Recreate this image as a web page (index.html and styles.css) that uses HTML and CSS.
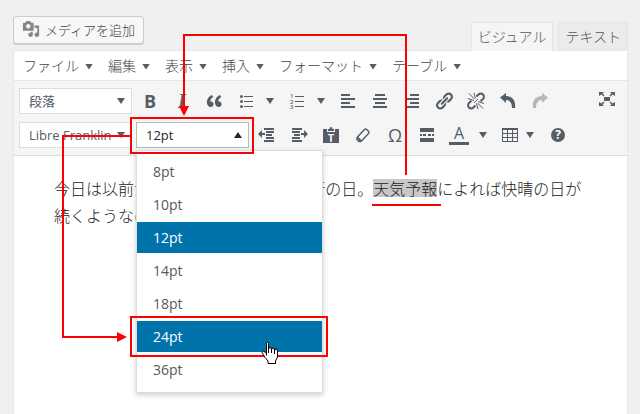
FILE: index.html
```html
<!DOCTYPE html>
<html lang="ja">
<head>
  <meta charset="UTF-8">
  <meta name="viewport" content="width=device-width, initial-scale=1">
  <title>投稿の編集</title>
  <link rel="stylesheet" href="styles.css">
</head>
<body>

<div class="page">

  <!-- Media button and tabs -->
  <div class="editor-head">
    <button type="button" class="media-btn">
      <svg class="media-icon" viewBox="0 0 20 20"><path d="M13 11V4c0-.55-.45-1-1-1h-1.67L9 1H5L3.67 3H2c-.55 0-1 .45-1 1v7c0 .55.45 1 1 1h10c.55 0 1-.45 1-1zM7 4.5c1.38 0 2.5 1.12 2.5 2.5S8.38 9.5 7 9.5 4.5 8.38 4.5 7 5.62 4.5 7 4.5zM14 6h5v10.5c0 1.38-1.12 2.5-2.5 2.5S14 17.88 14 16.5s1.12-2.5 2.5-2.5c.17 0 .34.02.5.05V9h-3V6zm-4 8.05V13h2v3.5c0 1.38-1.12 2.5-2.5 2.5S7 17.88 7 16.5 8.12 14 9.5 14c.17 0 .34.02.5.05z"/></svg>
      メディアを追加
    </button>
    <div class="tabs">
      <button type="button" class="tab active">ビジュアル</button>
      <button type="button" class="tab">テキスト</button>
    </div>
  </div>

  <div class="editor">

    <!-- Menu bar -->
    <div class="menubar">
      <button type="button" class="menu-btn">ファイル<span class="caret"></span></button>
      <button type="button" class="menu-btn">編集<span class="caret"></span></button>
      <button type="button" class="menu-btn">表示<span class="caret"></span></button>
      <button type="button" class="menu-btn">挿入<span class="caret"></span></button>
      <button type="button" class="menu-btn">フォーマット<span class="caret"></span></button>
      <button type="button" class="menu-btn">テーブル<span class="caret"></span></button>
    </div>

    <!-- Toolbars -->
    <div class="toolbars">
      <div class="toolbar">
        <div class="selects">
          <div class="select-box">
            <select aria-label="段落"><option>段落</option></select>
            <span class="caret"></span>
          </div>
        </div>
        <button type="button" class="tool bold" aria-label="太字">B</button>
        <button type="button" class="tool italic" aria-label="イタリック">I</button>
        <button type="button" class="tool" aria-label="引用">
          <svg viewBox="0 0 20 20"><path d="M9.49 13.22c0-.74-.2-1.38-.61-1.9-.62-.78-1.83-.88-2.53-.72-.29-1.65 1.11-3.75 2.92-4.65L7.88 4c-2.73 1.3-5.42 4.28-4.96 8.05C3.21 14.43 4.59 16 6.54 16c.85 0 1.56-.25 2.12-.75s.83-1.18.83-2.03zm8.05 0c0-.74-.2-1.38-.61-1.9-.63-.78-1.83-.88-2.53-.72-.29-1.65 1.11-3.75 2.92-4.65L15.93 4c-2.73 1.3-5.41 4.28-4.95 8.05.29 2.38 1.66 3.95 3.61 3.95.85 0 1.56-.25 2.12-.75s.83-1.18.83-2.03z"/></svg>
        </button>
        <button type="button" class="tool split" aria-label="番号なしリスト">
          <svg viewBox="0 0 20 20"><circle cx="5.5" cy="5.5" r="1.5"/><circle cx="5.5" cy="10.5" r="1.5"/><circle cx="5.5" cy="15.5" r="1.5"/><path d="M8 5h9v1H8zM8 10h9v1H8zM8 15h9v1H8z"/></svg>
          <span class="caret"></span>
        </button>
        <button type="button" class="tool split" aria-label="番号付きリスト">
          <svg viewBox="0 0 20 20"><text class="digit" x="3" y="7">1</text><text class="digit" x="3" y="13">2</text><text class="digit" x="3" y="18">3</text><path d="M8 5h9v1H8zM8 10h9v1H8zM8 15h9v1H8z"/></svg>
          <span class="caret"></span>
        </button>
        <button type="button" class="tool" aria-label="左寄せ">
          <svg viewBox="0 0 20 20"><path d="M3 3h9v2H3zM3 7h14v2H3zM3 11h9v2H3zM3 15h14v2H3z"/></svg>
        </button>
        <button type="button" class="tool" aria-label="中央揃え">
          <svg viewBox="0 0 20 20"><path d="M5 3h10v2H5zM3 7h14v2H3zM5 11h10v2H5zM3 15h14v2H3z"/></svg>
        </button>
        <button type="button" class="tool" aria-label="右寄せ">
          <svg viewBox="0 0 20 20"><path d="M8 3h9v2H8zM3 7h14v2H3zM8 11h9v2H8zM3 15h14v2H3z"/></svg>
        </button>
        <button type="button" class="tool" aria-label="リンク">
          <svg viewBox="0 0 20 20"><path d="M17.74 2.76c1.68 1.69 1.68 4.41 0 6.1l-1.53 1.52c-1.12 1.12-2.7 1.47-4.14 1.09l2.62-2.61.76-.77.76-.76c.84-.84.84-2.2 0-3.04-.84-.85-2.2-.85-3.04 0l-.77.76-3.38 3.38c-.37-1.44-.02-3.02 1.1-4.14l1.52-1.53c1.69-1.68 4.42-1.68 6.1 0zM8.59 13.43l5.34-5.34c.42-.42.42-1.1 0-1.52-.44-.43-1.13-.39-1.53 0l-5.33 5.34c-.42.42-.42 1.1 0 1.52.44.43 1.13.39 1.52 0zm-.76 2.29l4.14-4.15c.38 1.44.03 3.02-1.09 4.14l-1.52 1.53c-1.69 1.68-4.41 1.68-6.1 0-1.68-1.68-1.68-4.42 0-6.1l1.53-1.52c1.12-1.12 2.7-1.47 4.14-1.1l-4.14 4.15c-.85.84-.85 2.2 0 3.05.84.84 2.2.84 3.04 0z"/></svg>
        </button>
        <button type="button" class="tool" aria-label="リンクの削除">
          <svg class="line" viewBox="0 0 20 20"><path stroke-width="2" d="M10.500 5.500l2-2a3 3 0 0 1 4.500 4.500l-2.500 2.200M9.500 14.500l-2 2a3 3 0 0 1-4.500-4.500l2.500-2.200"/><path d="M8.500 8L3 2.500M9.500 7.500L8 2M8 9.500L2 7.500M11.500 12l5.500 5.500M10.500 12.500L12 18M12 10.500l6 2"/><path d="M8 12l4-4"/></svg>
        </button>
        <button type="button" class="tool" aria-label="取り消し">
          <svg viewBox="0 0 20 20"><path d="M8 2v3c6 0 10 4 9 12h-3c0-5-2-8-6-8v3L2 6.500z"/></svg>
        </button>
        <button type="button" class="tool" aria-label="やり直し" disabled>
          <svg viewBox="0 0 20 20"><path d="M12 2v3C6 5 2 9 3 17h3c0-5 2-8 6-8v3l6-5.500z"/></svg>
        </button>
        <button type="button" class="tool fullscreen" aria-label="集中執筆モード">
          <svg viewBox="0 0 20 20"><path d="M7 8h6v4H7zM2 3h5L5.500 4.500 7.500 6.500l-1 1-2-2L2 7zM18 3h-5l1.500 1.500-2 2 1 1 2-2L18 7zM2 17h5l-1.500-1.500 2-2-1-1-2 2L2 13zM18 17h-5l1.500-1.500-2-2 1-1 2 2L18 13z"/></svg>
        </button>
      </div>

      <div class="toolbar">
        <div class="selects">
          <div class="select-box">
            <select aria-label="フォント"><option>Libre Franklin</option></select>
            <span class="caret"></span>
          </div>
          <div class="select-box open">
            <select aria-label="フォントサイズ"><option>12pt</option></select>
            <span class="caret up"></span>
            <div class="size-menu">
              <button type="button" class="size">8pt</button>
              <button type="button" class="size">10pt</button>
              <button type="button" class="size selected">12pt</button>
              <button type="button" class="size">14pt</button>
              <button type="button" class="size">18pt</button>
              <button type="button" class="size selected">24pt</button>
              <button type="button" class="size">36pt</button>
            </div>
          </div>
        </div>
        <button type="button" class="tool" aria-label="インデントを減らす">
          <svg viewBox="0 0 20 20"><path d="M7 3h10v2H7zM9 6h8v2H9zM9 9h6v2H9zM9 12h8v2H9zM7 15h10v2H7zM1 9l4-4v3h3v2H5v3z"/></svg>
        </button>
        <button type="button" class="tool" aria-label="インデントを増やす">
          <svg viewBox="0 0 20 20"><path d="M3 3h10v2H3zM3 6h8v2H3zM5 9h6v2H5zM3 12h8v2H3zM3 15h10v2H3zM19 9l-4-4v3h-3v2h3v3z"/></svg>
        </button>
        <button type="button" class="tool" aria-label="テキストとしてペースト">
          <svg viewBox="0 0 20 20"><path d="M2 4h4v3h8V4h4v14H2z"/><path d="M7 6V4h1.500a1.500 2 0 0 1 3 0H13v2z"/><text class="paste-t" x="10" y="17">T</text></svg>
        </button>
        <button type="button" class="tool" aria-label="書式設定をクリア">
          <svg class="line" viewBox="0 0 20 20"><path stroke-width="1.400" d="M4 12.500l7.500-8c.7-.7 1.500-.7 2.200 0l1.800 1.800c.7.700.7 1.500 0 2.200l-7.500 8H6L4 14.500z"/><path stroke-width="2" d="M4.500 12.500L8 16"/></svg>
        </button>
        <button type="button" class="tool omega" aria-label="特殊文字">Ω</button>
        <button type="button" class="tool" aria-label="続きを読むタグ">
          <svg viewBox="0 0 20 20"><path d="M3 3h14v4H3zM3 13h14v4H3zM3 9h2v2H3zM6 9h3v2H6zM11 9h3v2h-3zM15 9h2v2h-2z"/></svg>
        </button>
        <button type="button" class="tool split" aria-label="テキスト色">
          <span class="color-letter">A</span>
          <span class="caret"></span>
        </button>
        <button type="button" class="tool split narrow" aria-label="テーブル">
          <svg viewBox="0 0 20 20"><path fill-rule="evenodd" d="M2 3h16v14H2zM3 5v3h4V5zM8 5v3h4V5zM13 5v3h4V5zM3 9v3h4V9zM8 9v3h4V9zM13 9v3h4V9zM3 13v3h4v-3zM8 13v3h4v-3zM13 13v3h4v-3z"/></svg>
          <span class="caret"></span>
        </button>
        <button type="button" class="tool" aria-label="キーボードショートカット">
          <span class="help">?</span>
        </button>
      </div>
    </div>

    <!-- Content -->
    <div class="content">
      <p>今日は以前から行ってみたかった旅行の日。<span class="marked">天気予報</span>によれば快晴の日が続くようなので楽しみ。</p>
    </div>
  </div>
</div>

<!-- Arrows and frames over the editor -->
<svg class="notes" width="640" height="414" viewBox="0 0 640 414">
  <g fill="none" stroke="#f00" stroke-width="2">
    <path d="M406 175V35H184V107"/>
    <path d="M130 136H63V337H118"/>
    <rect x="131" y="118" width="122" height="35"/>
    <rect x="131" y="317" width="196" height="39"/>
    <path d="M372 205H441"/>
  </g>
  <path fill="#f00" d="M179 106h10l-5 10zM117 332v10l10-5z"/>
  <!-- hand pointer -->
  <path fill="#fff" stroke="#000" d="M266.500 355.500V343.500q0-1 1-1t1 1v6q0-2 1.500-2t1.500 2v.500q0-2 1.500-2t1.500 2v1q0-2 1.500-2t1.500 2v6l-2 4v2.500h-7.500v-2.500l-3-3.500-3-5q0-2 2-1.500l2 2.500"/>
  <path fill="none" stroke="#000" d="M268.500 349v4M271.500 350v3M274.500 351v3"/>
</svg>

</body>
</html>
```
FILE: styles.css
```css
* {
  box-sizing: border-box;
}

body {
  margin: 0;
  overflow: hidden;
  background: #f0f0f0;
  color: #555d66;
  font-family: "Open Sans", "Noto Sans CJK JP", sans-serif;
  font-size: 13px;
}

button,
select {
  margin: 0;
  padding: 0;
  border: 0;
  background: none;
  color: inherit;
  font: inherit;
}

.page {
  display: flex;
  flex-direction: column;
  min-height: 100vh;
  padding: 16px 12px 0 13px;
}

.editor-head {
  display: flex;
  justify-content: space-between;
  align-items: flex-start;
  height: 34px;
}

.media-btn {
  display: flex;
  align-items: center;
  gap: 5px;
  height: 28px;
  padding: 0 8px 2px;
  border: 1px solid #ccc;
  border-radius: 3px;
  background: #f7f7f7;
  box-shadow: 0 1px 0 #ccc;
  color: #444;
  font-family: "Noto Sans CJK JP", sans-serif;
  font-weight: 300;
}

.media-icon {
  width: 18px;
  height: 18px;
  fill: #82878c;
}

.tabs {
  display: flex;
  gap: 5px;
  align-self: flex-end;
  height: 28px;
}

.tab {
  height: 28px;
  padding: 0 6px 2px;
  border: 1px solid #e5e5e5;
  border-bottom: 0;
  background: #ebebeb;
  color: #555;
  font-family: "Noto Sans CJK JP", sans-serif;
  font-size: 14px;
  font-weight: 300;
}

.tab.active {
  z-index: 1;
  height: 29px;
  background: #f5f5f5;
}

.editor {
  flex: 1;
  border: 1px solid #e5e5e5;
  border-bottom: 0;
  background: #fff;
}

.menubar {
  display: flex;
  gap: 15px;
  height: 30px;
  padding: 0 9px 2px;
  border-bottom: 1px solid #e5e5e5;
}

.menu-btn {
  display: flex;
  align-items: center;
  gap: 6px;
  color: #444;
  font-family: "Noto Sans CJK JP", sans-serif;
  font-size: 14px;
  font-weight: 300;
}

.caret {
  width: 8px;
  height: 6px;
  background: #555d66;
  clip-path: polygon(0 0, 100% 0, 50% 100%);
}

.menu-btn .caret {
  margin-top: 4px;
}

.caret.up {
  background: #23282d;
  clip-path: polygon(50% 0, 100% 100%, 0 100%);
}

/* toolbars */

.toolbars {
  padding: 3px 4px 3px 5px;
  border-bottom: 1px solid #ddd;
  background: #f5f5f5;
}

.toolbar {
  display: flex;
  align-items: center;
  height: 34px;
}

.selects {
  display: flex;
  gap: 4px;
  margin-right: 2px;
}

.select-box {
  position: relative;
  display: flex;
  align-items: center;
  width: 113px;
  height: 26px;
  border: 1px solid #ddd;
  background: #fff;
}

.select-box select {
  width: 100%;
  height: 24px;
  padding-left: 9px;
  appearance: none;
  outline: 0;
}

.select-box .caret {
  position: absolute;
  right: 6px;
  pointer-events: none;
}

.select-box.open {
  border-color: #b4b9be;
  color: #23282d;
}

.size-menu {
  position: absolute;
  top: 27px;
  left: -1px;
  z-index: 5;
  display: flex;
  flex-direction: column;
  gap: 2px;
  width: 187px;
  padding: 5px 0 7px;
  border: 1px solid #ddd;
  background: #fff;
  box-shadow: 0 2px 5px rgba(0, 0, 0, 0.2);
}

.size {
  height: 31px;
  padding-left: 16px;
  color: #595959;
  font-size: 14px;
  text-align: left;
}

.size.selected {
  background: #0073aa;
  color: #fff;
  font-weight: 500;
}

.tool {
  display: flex;
  align-items: center;
  justify-content: center;
  width: 32px;
  height: 30px;
}

.tool svg {
  flex: none;
  width: 20px;
  height: 20px;
  fill: #555d66;
}

.tool svg.line {
  fill: none;
  stroke: #555d66;
}

.tool:disabled {
  opacity: 0.4;
}

.tool.split {
  justify-content: flex-start;
  gap: 10px;
  width: 51px;
  padding-left: 6px;
}

.tool.split.narrow {
  gap: 6px;
  width: 48px;
}

.tool.fullscreen {
  align-self: flex-start;
  margin-left: auto;
}

.bold {
  font-size: 18px;
  font-weight: 700;
}

.italic {
  font-family: "Liberation Serif", serif;
  font-size: 20px;
  font-style: italic;
  font-weight: 700;
}

.omega {
  font-size: 18px;
  font-weight: 500;
}

.digit {
  font-size: 6px;
  font-weight: 600;
}

.paste-t {
  fill: #f5f5f5;
  font-size: 11px;
  font-weight: 700;
  text-anchor: middle;
}

.color-letter {
  width: 20px;
  border-bottom: 3px solid #555d66;
  font-size: 16px;
  line-height: 17px;
}

.help {
  width: 14px;
  height: 14px;
  border-radius: 50%;
  background: #555d66;
  color: #fff;
  font-size: 12px;
  font-weight: 700;
  line-height: 14px;
}

/* content */

.content {
  padding: 19px 40px;
  color: #222;
  font-family: "Noto Sans CJK JP", sans-serif;
  font-size: 16px;
  font-weight: 300;
  line-height: 27px;
}

.content p {
  margin: 0;
}

.marked {
  display: inline-block;
  background: #c8c8c8;
  line-height: 18px;
}

.notes {
  position: absolute;
  top: 0;
  left: 0;
  z-index: 10;
  pointer-events: none;
}
```
